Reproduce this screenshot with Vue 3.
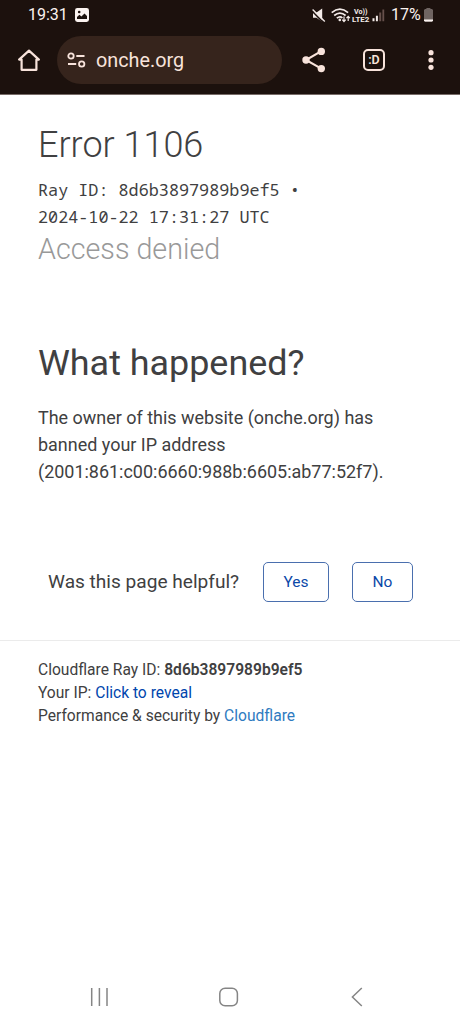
<script setup>
const details = [
  'The owner of this website (onche.org) has',
  'banned your IP address',
  '(2001:861:c00:6660:988b:6605:ab77:52f7).',
]
const rayLines = ['Ray ID: 8d6b3897989b9ef5 •', '2024-10-22 17:31:27 UTC']
</script>

<template>
  <div class="screen">
    <header class="chrome">
      <div class="status">
        <span class="clock">19:31</span>
        <svg class="photo" width="14" height="14" viewBox="0 0 14 14">
          <rect width="14" height="14" rx="2.4" fill="#fbf3f0" />
          <circle cx="4.2" cy="4" r="1.3" fill="#1c110d" />
          <path d="M2 11V9l2.4-2.2 2 1.8L9.5 5.4 12 8v3z" fill="#1c110d" />
        </svg>
        <span class="grow"></span>
        <svg class="signals" width="74" height="18" viewBox="311 5 74 18">
          <path d="M313 11.5h3.5l5.7-4v13.3l-5.7-4H313z" fill="#f3ebe8" />
          <path d="M311.4 9.4 323.4 21.6" stroke="#1c110d" stroke-width="1.5" />
          <path d="M312.6 8.6 324.8 20.6" stroke="#f3ebe8" stroke-width="1.4" />
          <g fill="none" stroke="#f3ebe8" stroke-width="1.7">
            <path d="M331.7 11.7q8.2-7 16.4 0" />
            <path d="M334.2 14.5q5.7-4.9 11.4 0" />
            <path d="M336.8 17.2q3.2-2.6 5.6-.2" />
          </g>
          <circle cx="339.8" cy="18.9" r="1.3" fill="#f3ebe8" />
          <path d="M344 15.5v5m-1.7-1.9 1.7 1.9 1.7-1.9M348.2 20v-4.7m-1.7 1.9 1.7-1.9 1.7 1.9" fill="none" stroke="#f3ebe8" stroke-width="1.2" />
          <g font-family="Roboto, sans-serif" font-weight="700" fill="#f3ebe8">
            <text x="354" y="12.9" font-size="6.8" textLength="13.5" lengthAdjust="spacingAndGlyphs">Vo))</text>
            <text x="352" y="20.9" font-size="7.4" textLength="17.3" lengthAdjust="spacingAndGlyphs">LTE2</text>
          </g>
          <path d="M372.5 17.2h2v3h-2zM375.9 14.7h2v5.5h-2z" fill="#f3ebe8" />
          <path d="M379.2 11.5h2v8.7h-2zM382.4 8.5h1.8v11.7h-1.8z" fill="#66504b" />
        </svg>
        <span class="percent">17%</span>
        <svg class="battery" width="9" height="14" viewBox="0 0 9 14">
          <path d="M2.4 1V0h4v1H8l1 1v10.5L8 14H1l-1-1.5V2l1-1z" fill="#6f6461" />
          <path d="M0 11.6h9v1L8.2 13.5H.8L0 12.5z" fill="#fbf3f0" />
        </svg>
      </div>
      <div class="toolbar">
        <svg class="home" width="24" height="24" viewBox="0 0 24 24">
          <path d="M4.6 11.6H2.1L12 2.6l9.9 9h-2.5v10.2H4.6z" fill="none" stroke="#f8e3db" stroke-width="2.2" stroke-linejoin="round" />
        </svg>
        <div class="address">
          <svg width="20" height="16" viewBox="0 0 20 16" fill="none" stroke="#f8e3db" stroke-width="1.8">
            <circle cx="4" cy="4" r="2.7" />
            <path d="M9.3 4h8.2M1 12h8.2" />
            <circle cx="14.7" cy="12" r="2.7" />
          </svg>
          <span>onche.org</span>
        </div>
        <svg class="share" width="24" height="26" viewBox="0 0 24 26">
          <path d="M19.3 4.2 4 13l15.3 8.6" fill="none" stroke="#f8e3db" stroke-width="2.1" />
          <g fill="#f8e3db"><circle cx="19.3" cy="4.4" r="3.7" /><circle cx="4" cy="13" r="3.7" /><circle cx="19.3" cy="21.6" r="3.7" /></g>
        </svg>
        <div class="tabs">:D</div>
        <svg class="more" width="6" height="20" viewBox="0 0 6 20" fill="#f8e3db">
          <circle cx="3" cy="2.7" r="2.6" /><circle cx="3" cy="10" r="2.6" /><circle cx="3" cy="17.3" r="2.6" />
        </svg>
      </div>
    </header>

    <main class="page">
      <section class="intro">
        <h1>Error 1106</h1>
        <div class="ray"><div v-for="line in rayLines" :key="line">{{ line }}</div></div>
        <h2 class="denied">Access denied</h2>
      </section>
      <section class="reason">
        <h2>What happened?</h2>
        <p><span v-for="line in details" :key="line">{{ line }}</span></p>
      </section>
      <section class="feedback">
        <span>Was this page helpful?</span>
        <button class="yes">Yes</button>
        <button class="no">No</button>
      </section>
      <footer>
        <div>Cloudflare Ray ID: <strong>8d6b3897989b9ef5</strong></div>
        <div>Your IP: <a class="reveal">Click to reveal</a></div>
        <div>Performance &amp; security by <a class="brand">Cloudflare</a></div>
      </footer>
    </main>

    <nav class="system">
      <svg width="18" height="20" viewBox="0 0 18 20"><path d="M1.7 1v18M9.4 1v18M17 1v18" stroke="#858585" stroke-width="1.5" /></svg>
      <svg width="20" height="20" viewBox="0 0 20 20"><rect x=".8" y="1.2" width="17.6" height="17.6" rx="5.3" fill="none" stroke="#858585" stroke-width="1.5" /></svg>
      <svg width="12" height="20" viewBox="0 0 12 20"><path d="M10.8 1 1.4 10l9.4 9" fill="none" stroke="#858585" stroke-width="1.5" /></svg>
    </nav>
  </div>
</template>

<style>
body { margin: 0; background: #fff; }
</style>

<style scoped>
.screen {
  width: 460px;
  height: 1024px;
  display: flex;
  flex-direction: column;
  overflow: hidden;
  background: #fff;
  color: #404041;
  font-family: Roboto, sans-serif;
}
.screen svg { display: block; flex: none; }
.chrome {
  box-sizing: border-box;
  height: 95px;
  flex: none;
  background: #1c110d;
  border-bottom: 1px solid #776b67;
}
.status {
  height: 30px;
  display: flex;
  align-items: center;
  padding: 0 27px 0 28px;
  color: #fbf3f0;
  font-size: 16px;
  line-height: 30px;
}
.clock { width: 40px; white-space: nowrap; }
.photo { margin-left: 7px; }
.grow { flex: 1; }
.signals { margin-right: 6px; }
.percent { width: 31px; white-space: nowrap; }
.battery { margin-left: 2px; }
.toolbar { height: 60px; display: flex; align-items: center; padding-left: 17px; }
.address {
  box-sizing: border-box;
  width: 225px;
  height: 48px;
  margin-left: 16px;
  padding-left: 10px;
  border-radius: 24px;
  background: #36241c;
  display: flex;
  align-items: center;
  gap: 9px;
  color: #f8e3db;
  font-size: 19.8px;
}
.share { margin-left: 20px; }
.tabs {
  box-sizing: border-box;
  width: 22px;
  height: 22px;
  margin-left: 37px;
  border: 2px solid #f8e3db;
  border-radius: 5px;
  color: #f8e3db;
  font-size: 12.5px;
  font-weight: 600;
  line-height: 17px;
  text-align: center;
}
.more { margin-left: 43px; }
.page { flex: 1; }
h1, h2, p { margin: 0; font-weight: 400; white-space: nowrap; }
.intro { height: 240px; padding: 28px 38px 0; box-sizing: border-box; }
h1 { font-size: 36px; line-height: 44px; font-weight: 300; }
.ray {
  padding: 9px 0 0;
  font: 16.8px/27.2px "Noto Sans Mono", "Droid Sans Mono", "DejaVu Sans Mono", monospace;
  white-space: nowrap;
}
.denied { padding-top: .6px; font-size: 28.7px; line-height: 36px; font-weight: 300; color: #999; }
.reason { height: 215px; padding: 6px 38px 0; box-sizing: border-box; }
.reason h2 { font-size: 35.9px; line-height: 44px; }
.reason p { padding-top: 19px; font-size: 17.97px; line-height: 27px; }
.reason p span { display: block; }
.feedback { display: flex; align-items: center; height: 63px; padding: 0 0 27px 48px; font-size: 19.1px; }
.feedback span { width: 215px; white-space: nowrap; }
button {
  box-sizing: border-box;
  height: 40px;
  padding: 1px 0 0;
  border: 1px solid #4a6fae;
  border-radius: 5px;
  background: #fff;
  color: #0b48a8;
  font: 15.5px Roboto, sans-serif;
}
.yes { width: 66px; }
.no { width: 61px; margin-left: 23px; }
footer {
  border-top: 1px solid #ebebeb;
  padding: 18px 38px;
  font-size: 15.6px;
  line-height: 23.2px;
  white-space: nowrap;
}
strong { font-weight: 600; }
.reveal { color: #0046ad; }
.brand { color: #2f7bbf; }
.system { height: 55px; flex: none; display: grid; grid-template-columns: 18px 20px 12px; column-gap: 111px; padding: 0 0 0 90px; align-items: center; }
.system svg:last-child { margin-left: 1px; }
</style>
